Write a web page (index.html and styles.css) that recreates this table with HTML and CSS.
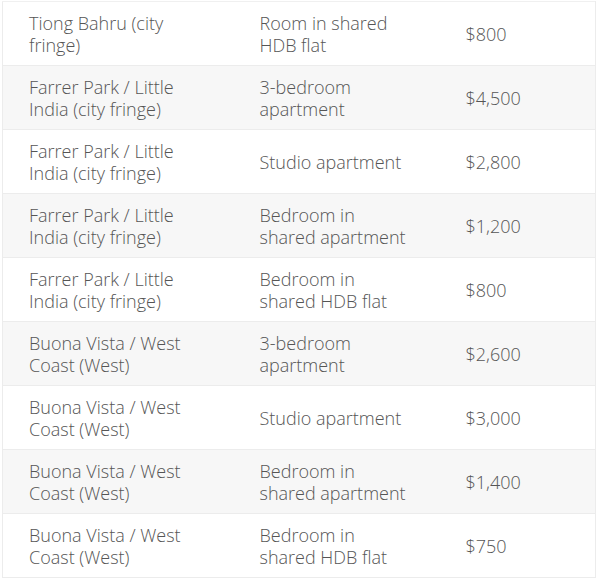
FILE: index.html
```html
<!DOCTYPE html>
<html>
<head>
<meta charset="utf-8">
<link rel="stylesheet" href="styles.css">
</head>
<body>
<div class="page">
<table class="rent">
<tbody>
<tr><td>Tiong Bahru (city<br>fringe)</td><td>Room in shared<br>HDB flat</td><td>$800</td></tr>
<tr><td>Farrer Park / Little<br>India (city fringe)</td><td>3-bedroom<br>apartment</td><td>$4,500</td></tr>
<tr><td>Farrer Park / Little<br>India (city fringe)</td><td>Studio apartment</td><td>$2,800</td></tr>
<tr><td>Farrer Park / Little<br>India (city fringe)</td><td>Bedroom in<br>shared apartment</td><td>$1,200</td></tr>
<tr><td>Farrer Park / Little<br>India (city fringe)</td><td>Bedroom in<br>shared HDB flat</td><td>$800</td></tr>
<tr><td>Buona Vista / West<br>Coast (West)</td><td>3-bedroom<br>apartment</td><td>$2,600</td></tr>
<tr><td>Buona Vista / West<br>Coast (West)</td><td>Studio apartment</td><td>$3,000</td></tr>
<tr><td>Buona Vista / West<br>Coast (West)</td><td>Bedroom in<br>shared apartment</td><td>$1,400</td></tr>
<tr><td>Buona Vista / West<br>Coast (West)</td><td>Bedroom in<br>shared HDB flat</td><td>$750</td></tr>
</tbody>
</table>
</div>
</body>
</html>
```

FILE: styles.css
```css
html, body {
  margin: 0;
  padding: 0;
  background: #ffffff;
}
.page {
  padding: 1px 4px 0 2px;
  background: #ffffff;
}
.rent {
  width: 594px;
  border-collapse: collapse;
  border-left: 1px solid #ececec;
  border-right: 1px solid #ececec;
  border-top: 1px solid #f0f0f0;
  font-family: "Open Sans", "Lato", sans-serif;
  font-weight: 300;
  font-size: 18px;
  line-height: 22px;
  color: #555555;
}
.rent td {
  height: 64px;
  padding: 0 10px 0 26px;
  vertical-align: middle;
  border-bottom: 1px solid #ececec;
  box-sizing: border-box;
}
.rent td:nth-child(1) { width: 231px; }
.rent td:nth-child(2) { width: 206px; }
.rent tr:nth-child(even) td {
  background: #f7f7f7;
}
```
